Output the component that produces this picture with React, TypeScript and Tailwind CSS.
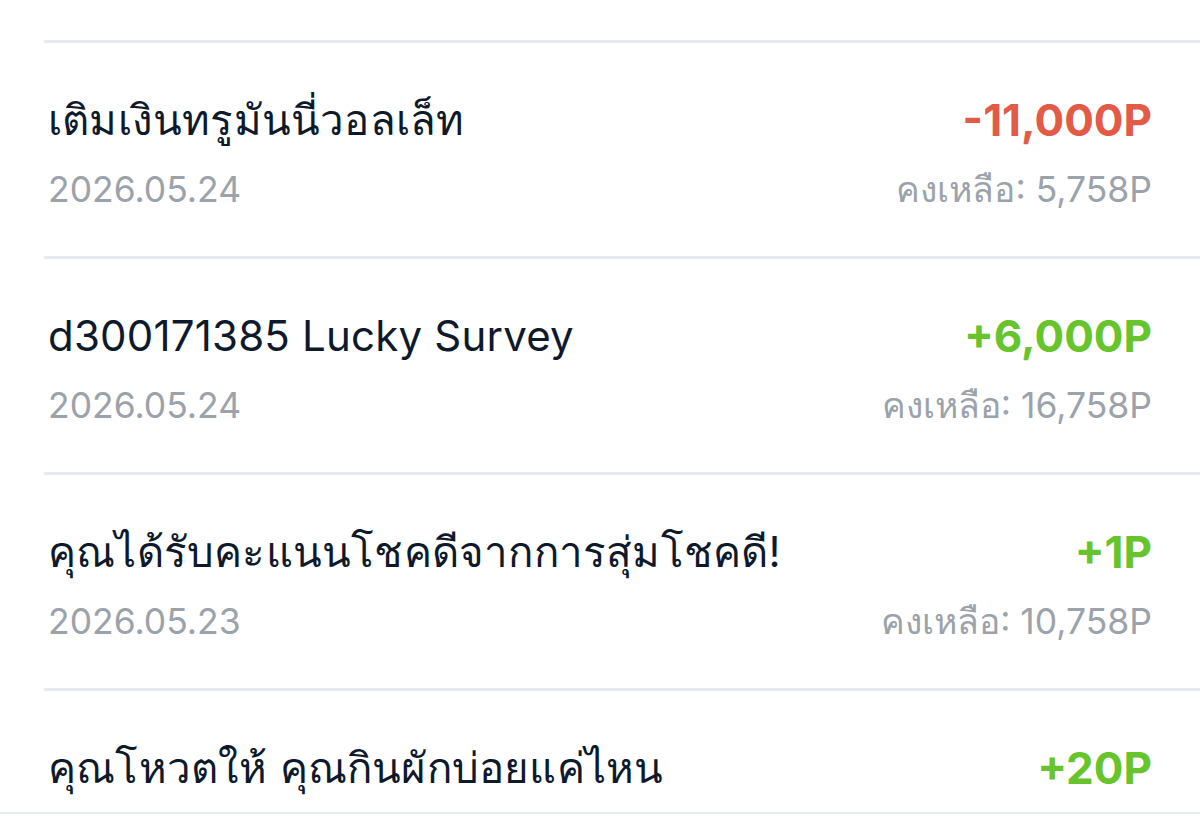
import React from 'react';

type Entry = {
  id: number;
  title: string;
  date?: string;
  amount: string;
  balance?: string;
  negative?: boolean;
};

const entries: Entry[] = [
  { id: 1, title: 'เติมเงินทรูมันนี่วอลเล็ท', date: '2026.05.24', amount: '-11,000P', balance: 'คงเหลือ: 5,758P', negative: true },
  { id: 2, title: 'd300171385 Lucky Survey', date: '2026.05.24', amount: '+6,000P', balance: 'คงเหลือ: 16,758P' },
  { id: 3, title: 'คุณได้รับคะแนนโชคดีจากการสุ่มโชคดี!', date: '2026.05.23', amount: '+1P', balance: 'คงเหลือ: 10,758P' },
  { id: 4, title: 'คุณโหวตให้ คุณกินผักบ่อยแค่ไหน', amount: '+20P' },
];

function HistoryRow({ entry }: { entry: Entry }) {
  return (
    <div className={`border-t-[3px] border-[#e6ebf1] pl-[4px] pr-[48px] pt-[52px] ${entry.date ? 'pb-[44px]' : 'pb-[19px]'}`}>
      <div className="flex items-center justify-between h-[50px]">
        <span className="text-[42px] leading-[50px] text-[#0e1a2c] tracking-[0.2px]">{entry.title}</span>
        <span
          className={`text-[44px] leading-[50px] font-bold ${entry.negative ? 'text-[#e35b47]' : 'text-[#67c42c]'}`}
        >
          {entry.amount}
        </span>
      </div>
      {entry.date && (
        <div className="mt-[23px] flex items-center justify-between h-[44px]">
          <span className="text-[35.5px] leading-[44px] text-[#9ca2aa]">{entry.date}</span>
          <span className="text-[35.5px] leading-[44px] text-[#9ca2aa]">{entry.balance}</span>
        </div>
      )}
    </div>
  );
}

export default function App() {
  return (
    <div
      className="w-[1200px] h-[820px] overflow-hidden bg-white"
      style={{ fontFamily: 'Inter, "Noto Sans", sans-serif' }}
    >
      <div className="pt-[40px] pl-[44px]">
        {entries.map((entry) => (
          <HistoryRow key={entry.id} entry={entry} />
        ))}
      </div>
      <div className="h-[20px] border-t-2 border-[#e8ecef] bg-white" />
    </div>
  );
}
